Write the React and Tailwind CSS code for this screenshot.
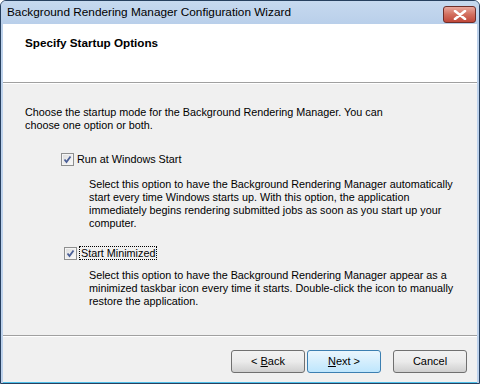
import React from 'react';

const font = { fontFamily: '"Liberation Sans", Arial, sans-serif' };

const CheckBox = () => (
  <span className="inline-flex h-[13px] w-[13px] shrink-0 items-center justify-center border border-[#8e8f8f] bg-gradient-to-br from-[#dcdcdc] to-[#fbfbfb]">
    <svg width="11" height="11" viewBox="0 0 11 11">
      <rect x="0.5" y="0.5" width="10" height="10" fill="none" stroke="#f4f4f4" />
      <path d="M2.5 5.5 L4.5 8 L8.5 2.5" fill="none" stroke="#4a5f97" strokeWidth="1.8" />
    </svg>
  </span>
);

const Button = ({ children, focus }) => (
  <button
    className={`h-[23px] w-[74px] rounded-[3px] border text-[11px] text-black ${
      focus
        ? 'border-[#3c7fb1] bg-gradient-to-b from-[#eaf6fd] to-[#bee6fd]'
        : 'border-[#707070] bg-gradient-to-b from-[#f2f2f2] via-[#ebebeb] to-[#cfcfcf]'
    }`}
    style={font}
  >
    {children}
  </button>
);

export default function App() {
  return (
    <div className="h-[384px] w-[480px] overflow-hidden rounded-t-[6px] border border-[#27405f] bg-[#bdd2ec]" style={font}>
      <div className="flex h-[384px] flex-col">
        {/* title bar */}
        <div className="flex h-[23px] shrink-0 items-center justify-between bg-gradient-to-b from-[#c6d9ef] to-[#b9cfea] pl-[6px] pr-[3px]">
          <span className="text-[11.8px] text-black">Background Rendering Manager Configuration Wizard</span>
          <div className="mt-[4px] flex h-[17px] w-[33px] items-center justify-center rounded-[3px] border border-[#6e2f2a] bg-gradient-to-b from-[#e8a89e] via-[#d26f5f] to-[#c0473a]">
            <svg width="14" height="10" viewBox="0 0 14 10">
              <path d="M2 1 L12 9 M12 1 L2 9" stroke="#ffffff" strokeWidth="2.6" strokeLinecap="round" />
            </svg>
          </div>
        </div>

        <div className="mx-[2px] mb-[1px] flex flex-1 flex-col border-b-2 border-[#4fc0ea] bg-[#f0f0f0]">
          {/* header */}
          <div className="h-[59px] shrink-0 border-b border-[#a0a0a0] bg-white pl-[22px] pt-[12px]">
            <div className="text-[11.7px] font-bold leading-[13px] text-black">Specify Startup Options</div>
          </div>
          <div className="h-px bg-white" />

          {/* body */}
          <div className="flex flex-1 flex-col pl-[22px] pt-[22px] text-[10.8px] leading-[13px] text-black">
            <p className="w-[362px]">
              Choose the startup mode for the Background Rendering Manager. You can choose one option or both.
            </p>

            <label className="ml-[36px] mt-[21px] flex items-center gap-[3px]">
              <CheckBox />
              <span>Run at Windows Start</span>
            </label>
            <p className="ml-[64px] mt-[12px] w-[380px]">
              Select this option to have the Background Rendering Manager automatically start every time Windows starts up. With this option, the application immediately begins rendering submitted jobs as soon as you start up your computer.
            </p>

            <label className="ml-[39px] mt-[16px] flex items-center gap-[2px]">
              <CheckBox />
              <span className="border border-dotted border-black px-px leading-[12px]">Start Minimized</span>
            </label>
            <p className="ml-[64px] mt-[9px] w-[380px]">
              Select this option to have the Background Rendering Manager appear as a minimized taskbar icon every time it starts. Double-click the icon to manually restore the application.
            </p>
          </div>

          {/* footer */}
          <div className="h-px shrink-0 bg-[#a0a0a0]" />
          <div className="h-px shrink-0 bg-white" />
          <div className="flex h-[45px] shrink-0 items-start justify-end pr-[10px] pt-[13px]">
            <Button>&lt; <u>B</u>ack</Button>
            <div className="w-[2px]" />
            <Button focus>
              <u>N</u>ext &gt;
            </Button>
            <div className="w-[12px]" />
            <Button>Cancel</Button>
          </div>
        </div>
      </div>
    </div>
  );
}
